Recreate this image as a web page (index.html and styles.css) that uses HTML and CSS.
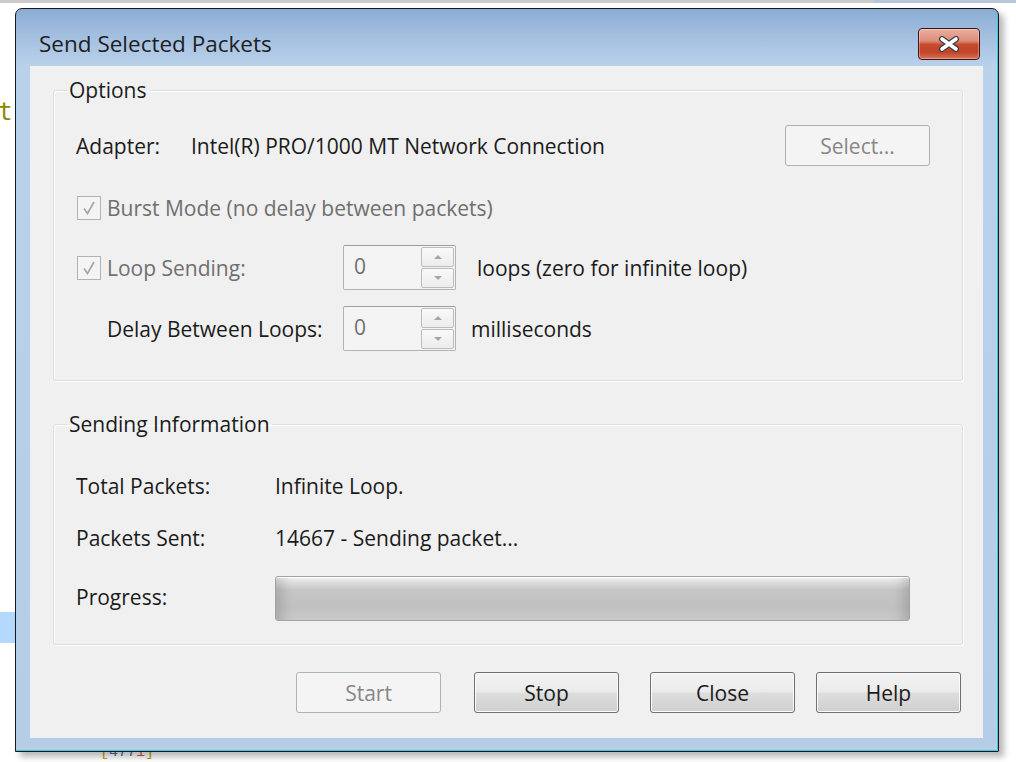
FILE: index.html
```html
<!DOCTYPE html>
<html>
<head>
<meta charset="utf-8">
<title>Send Selected Packets</title>
<link rel="stylesheet" href="styles.css">
</head>
<body>
<div class="topstrip"></div>
<span class="bg-t">t</span>
<div class="bg-sel"></div>
<span class="bg-num"><span class="n1">[</span><span class="n2">477</span><span class="n3">1</span><span class="n1">]</span></span>

<div class="window">
  <div class="titlebar">
    <span class="title">Send Selected Packets</span>
    <button class="close-btn" aria-label="Close">
      <svg width="22" height="16" viewBox="0 0 22 16">
        <path d="M4 3 L18 13 M18 3 L4 13" stroke="#3d3d46" stroke-width="6" stroke-linecap="round" fill="none"/>
        <path d="M4 3 L18 13 M18 3 L4 13" stroke="#ffffff" stroke-width="3.6" stroke-linecap="round" fill="none"/>
      </svg>
    </button>
  </div>

  <div class="client">
    <fieldset class="group">
      <legend>Options</legend>
      <div class="group-body options-body">
        <div class="row row-adapter">
          <span class="adapter-label">Adapter:</span>
          <span class="adapter-value">Intel(R) PRO/1000 MT Network Connection</span>
          <button class="btn" disabled>Select...</button>
        </div>
        <div class="row row-burst">
          <span class="check"><svg width="18" height="18" viewBox="0 0 18 18"><path d="M4 9.5 L7.5 14.5 L14 3" stroke="#a3a3a3" stroke-width="1.6" fill="none"/></svg></span>
          <span class="disabled-text">Burst Mode (no delay between packets)</span>
        </div>
        <div class="row row-loop">
          <div class="first-cell">
            <span class="check"><svg width="18" height="18" viewBox="0 0 18 18"><path d="M4 9.5 L7.5 14.5 L14 3" stroke="#a3a3a3" stroke-width="1.6" fill="none"/></svg></span>
            <span class="disabled-text">Loop Sending:</span>
          </div>
          <div class="spin">
            <span class="spin-val">0</span>
            <span class="spin-btns">
              <span class="spin-btn"><span class="arrow-up"></span></span>
              <span class="spin-btn"><span class="arrow-down"></span></span>
            </span>
          </div>
          <span class="after-loops">loops (zero for infinite loop)</span>
        </div>
        <div class="row row-delay">
          <div class="first-cell indent">Delay Between Loops:</div>
          <div class="spin">
            <span class="spin-val">0</span>
            <span class="spin-btns">
              <span class="spin-btn"><span class="arrow-up"></span></span>
              <span class="spin-btn"><span class="arrow-down"></span></span>
            </span>
          </div>
          <span class="after-ms">milliseconds</span>
        </div>
      </div>
    </fieldset>

    <fieldset class="group group-info">
      <legend>Sending Information</legend>
      <div class="group-body info-body">
        <div class="row info-row">
          <span class="info-label">Total Packets:</span>
          <span>Infinite Loop.</span>
        </div>
        <div class="row info-row info-row-2">
          <span class="info-label">Packets Sent:</span>
          <span>14667 - Sending packet...</span>
        </div>
        <div class="row progress-row">
          <span class="info-label">Progress:</span>
          <div class="progress"></div>
        </div>
      </div>
    </fieldset>

    <div class="buttons">
      <button class="btn btn-start" disabled>Start</button>
      <button class="btn btn-stop">Stop</button>
      <button class="btn btn-close">Close</button>
      <button class="btn btn-help">Help</button>
    </div>
  </div>
</div>
</body>
</html>
```

FILE: styles.css
```css
* { box-sizing: border-box; }

html, body {
  margin: 0;
  padding: 0;
  background: #ffffff;
}

body {
  width: 1016px;
  height: 762px;
  overflow: hidden;
  position: relative;
  font-family: "Open Sans", "Noto Sans", sans-serif;
  font-size: 21px;
  color: #1b1b1b;
}

.topstrip {
  height: 3px;
  margin-bottom: 5px;
  background: linear-gradient(90deg, #cbcbcb 0, #cbcbcb 86%, #b7c7da 86%, #b7c7da 100%);
}

.bg-t {
  position: absolute;
  left: -2px;
  top: 98px;
  font-family: "DejaVu Sans Mono", monospace;
  font-size: 24px;
  color: #8f8700;
}

.bg-sel {
  position: absolute;
  left: 0;
  top: 612px;
  width: 16px;
  height: 31px;
  background: #b5d8fd;
}

.bg-num {
  position: absolute;
  left: 100px;
  top: 744px;
  font-family: "Liberation Mono", monospace;
  font-size: 15px;
  line-height: 17px;
}
.bg-num .n1 { color: #b8a600; }
.bg-num .n2 { color: #5a6a9a; }
.bg-num .n3 { color: #d2563a; }

.window {
  position: relative;
  z-index: 1;
  margin-left: 15px;
  width: 984px;
  height: 744px;
  border: 1px solid #1a1a1a;
  border-radius: 7px 7px 0 0;
  background: linear-gradient(180deg, #8aacd3 0, #a4c0e1 28px, #b9d1ea 57px, #b6cde8 100%);
  box-shadow: inset -1px -1px 0 #3fc6de, 5px 5px 6px rgba(0, 0, 0, 0.28);
  padding: 0 15px 13px 14px;
  display: flex;
  flex-direction: column;
}

.titlebar {
  height: 57px;
  display: flex;
  align-items: flex-end;
  justify-content: space-between;
  padding: 0 3px 6px 9px;
}

.title {
  font-size: 22.5px;
  line-height: 26px;
  margin-bottom: 3px;
  color: #1e1e1e;
}

.close-btn {
  width: 62px;
  height: 32px;
  padding: 0;
  border: 1px solid #451212;
  border-radius: 4px;
  background: linear-gradient(180deg, #eab0a2 0, #dc8c78 40%, #c64a2e 52%, #c2442a 78%, #d7765b 100%);
  box-shadow: inset 0 0 0 1px rgba(255, 255, 255, 0.3);
  display: flex;
  align-items: center;
  justify-content: center;
}

.client {
  flex: 1;
  background: #f0f0f0;
  padding: 12px 20px 0 23px;
}

.group {
  margin: 0;
  padding: 0;
  min-width: 0;
  border: 1px solid #d5dfe5;
  border-radius: 3px;
  box-shadow: inset 1px 1px 0 #ffffff, 1px 1px 0 #ffffff;
}

.group legend {
  margin-left: 13px;
  padding: 0 2px;
  line-height: 24px;
  font-size: 21px;
}

.group-info {
  margin-top: 31px;
}

.group-body {
  display: flex;
  flex-direction: column;
}

.options-body {
  padding: 23px 32px 29px 22px;
}

.row {
  display: flex;
  align-items: center;
}

.row-adapter { height: 41px; }
.adapter-label { width: 115px; }
.adapter-value { flex: 1; }

.row-burst { height: 26px; margin-top: 29px; padding-left: 1px; }
.row-loop { height: 45px; margin-top: 24px; }
.row-delay { height: 45px; margin-top: 16px; }

.first-cell {
  width: 267px;
  display: flex;
  align-items: center;
  padding-left: 1px;
}
.first-cell.indent { padding-left: 31px; }

.check {
  width: 24px;
  height: 24px;
  margin-right: 6px;
  border: 1px solid #b3b3b3;
  background: #f4f4f4;
  display: flex;
  align-items: center;
  justify-content: center;
}

.disabled-text { color: #6f6f6f; }

.spin {
  width: 113px;
  height: 45px;
  border: 1px solid #b1b3b7;
  border-top-color: #9a9da2;
  border-radius: 2px;
  background: #f4f4f4;
  padding: 1px 1px 1px 10px;
  display: flex;
  align-items: center;
}

.spin-val {
  flex: 1;
  color: #707070;
  align-self: flex-start;
  line-height: 38px;
}

.spin-btns {
  width: 33px;
  height: 100%;
  display: flex;
  flex-direction: column;
  gap: 1px;
}

.spin-btn {
  flex: 1;
  border: 1px solid #bcbcbc;
  border-radius: 2px;
  background: linear-gradient(180deg, #f9f9f9, #ececec);
  display: flex;
  align-items: center;
  justify-content: center;
}

.arrow-up {
  width: 0;
  height: 0;
  border-left: 4px solid transparent;
  border-right: 4px solid transparent;
  border-bottom: 4px solid #a6a6a6;
}

.arrow-down {
  width: 0;
  height: 0;
  border-left: 4px solid transparent;
  border-right: 4px solid transparent;
  border-top: 4px solid #a6a6a6;
}

.after-loops { margin-left: 21px; }
.after-ms { margin-left: 15px; }

.info-body {
  padding: 35px 52px 23px 22px;
}

.info-row { height: 30px; }
.info-row-2 { margin-top: 22px; }
.info-label { width: 199px; }

.progress-row { height: 45px; margin-top: 23px; }
.progress-row .info-label { margin-top: -4px; }

.progress {
  width: 635px;
  height: 45px;
  border: 1px solid #a3a3a3;
  border-radius: 3px;
  background: linear-gradient(180deg, #f4f4f4 0, #dedede 12%, #c6c6c6 30%, #c1c1c1 70%, #c9c9c9 100%);
  box-shadow: inset 0 1px 0 #ffffff, inset 16px 0 12px -10px rgba(0, 0, 0, 0.15), inset -16px 0 12px -10px rgba(0, 0, 0, 0.15);
}

.buttons {
  display: flex;
  margin-top: 27px;
  padding-left: 243px;
}

.btn {
  width: 145px;
  height: 41px;
  padding: 0;
  font-family: inherit;
  font-size: 21px;
  color: #1b1b1b;
  border: 1px solid #707070;
  border-radius: 3px;
  background: linear-gradient(180deg, #f3f3f3 0, #ebebeb 48%, #dddddd 52%, #cfcfcf 100%);
  box-shadow: inset 0 0 0 1px #fbfbfb;
}

.btn:disabled {
  border-color: #adb2b5;
  background: #f4f4f4;
  color: #878787;
  box-shadow: none;
}

.btn-stop { margin-left: 33px; }
.btn-close { margin-left: 31px; }
.btn-help { margin-left: 21px; }
```
